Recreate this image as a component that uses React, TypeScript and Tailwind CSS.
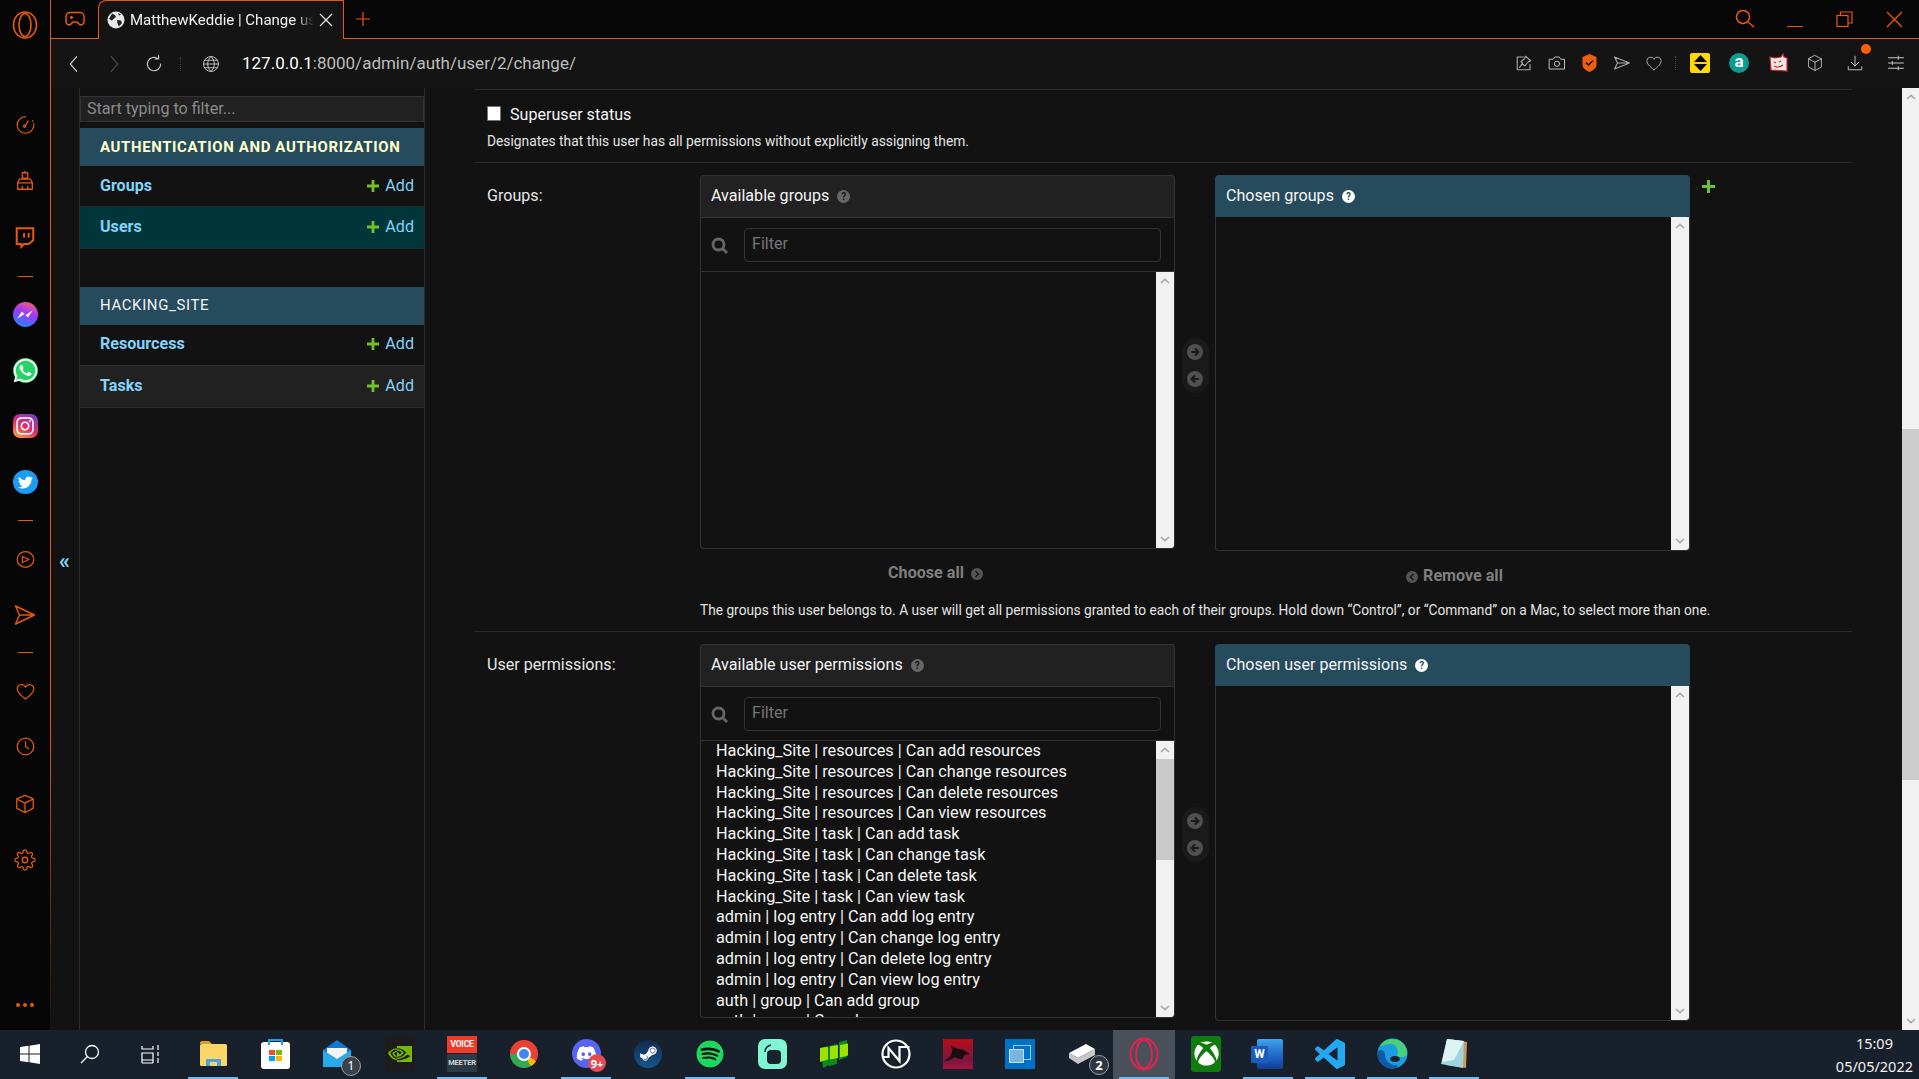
import React from 'react';
import { FaDiscord, FaSpotify, FaSteamSymbol, FaWhatsapp, FaInstagram, FaTwitter, FaXbox } from 'react-icons/fa';
import { SiNvidia } from 'react-icons/si';

const ORANGE = '#e8590c';

// small stroke icon wrapper, everything in the browser chrome is drawn like this
const Ic = ({ size = 20, color = ORANGE, sw = 1.4, children }: { size?: number; color?: string; sw?: number; children: React.ReactNode }) => (
  <svg width={size} height={size} viewBox="0 0 24 24" fill="none" stroke={color} strokeWidth={sw} strokeLinecap="round" strokeLinejoin="round">
    {children}
  </svg>
);

const Chevron = ({ up = false }: { up?: boolean }) => (
  <svg width="10" height="6" viewBox="0 0 10 6" fill="none" stroke="#a8a8a8" strokeWidth="1.6">
    <path d={up ? 'M1 5l4-3.6L9 5' : 'M1 1l4 3.6L9 1'} />
  </svg>
);

const Scrollbar = ({ thumb }: { thumb?: boolean }) => (
  <div className="w-[18px] shrink-0 bg-[#f1f1f1] flex flex-col items-center">
    <div className="h-[18px] shrink-0 flex items-center justify-center"><Chevron up /></div>
    <div className="flex-1 w-full">{thumb && <div className="h-[101px] w-full bg-[#c9c9c9]" />}</div>
    <div className="h-[18px] shrink-0 flex items-center justify-center"><Chevron /></div>
  </div>
);

const Help = ({ white = false }: { white?: boolean }) => (
  <span className={`inline-flex w-[13px] h-[13px] rounded-full items-center justify-center text-[10px] font-bold leading-none ml-[8px] ${white ? 'bg-white text-[#264b5d]' : 'bg-[#666666] text-[#121212]'}`}>?</span>
);

const RoundArrow = ({ left = false }: { left?: boolean }) => (
  <svg width="16" height="16" viewBox="0 0 16 16">
    <circle cx="8" cy="8" r="8" fill="#505050" />
    <path d={left ? 'M12 8H5M8 4.5L4.5 8 8 11.5' : 'M4 8h7M8 4.5L11.5 8 8 11.5'} stroke="#1a1a1a" strokeWidth="2" fill="none" />
  </svg>
);

const Plus = ({ size = 12 }: { size?: number }) => (
  <svg width={size} height={size} viewBox="0 0 12 12"><path d="M4.6 0h2.8v4.6H12v2.8H7.4V12H4.6V7.4H0V4.6h4.6z" fill="#70bf2b" /></svg>
);

const Selector = ({ title, chosen, items, availH, chosenH }: { title: string; chosen: string; items: string[]; availH: string; chosenH: string }) => (
  <div className="flex items-start">
    <div className="w-[475px]">
      <div className="border border-b-0 border-[#333333] rounded-t-[4px] h-[42px] bg-[#212121] flex items-center pl-[10px] text-[16.1px] text-[#f5f5f5]">
        {`Available ${title}`}<Help />
      </div>
      <div className="border border-[#333333] h-[55px] flex items-center pl-[10px] pr-[13px]">
        <svg width="18" height="18" viewBox="0 0 18 18" fill="none" stroke="#666666" strokeWidth="2.8" className="mt-[3px] shrink-0">
          <circle cx="7.5" cy="7.5" r="5.5" /><path d="M11.5 11.5L16 16" />
        </svg>
        <div className="ml-[15px] flex-1 h-[34px] border border-[#333333] rounded-[4px] flex items-center pl-[7px] text-[16.1px] text-[#757575]">Filter</div>
      </div>
      <div className={`border border-t-0 border-[#333333] rounded-b-[4px] flex overflow-hidden ${availH}`}>
        <div className="flex-1 overflow-hidden pl-[15px] text-[16.27px] text-[#f5f5f5]">
          {items.map((it) => <div key={it} className="h-[20.8px] leading-[20.8px] whitespace-nowrap">{it}</div>)}
        </div>
        <Scrollbar thumb={items.length > 0} />
      </div>
      <div className="flex items-center justify-center h-[22px] mt-[13px] text-[16.1px] font-bold text-[#7f7f7f] -translate-x-[2px]">
        Choose all
        <span className="ml-[7px] mt-[2px] flex"><svg width="12" height="12" viewBox="0 0 12 12"><circle cx="6" cy="6" r="6" fill="#555555" /><path d="M4.5 3L7.5 6l-3 3" stroke="#1a1a1a" strokeWidth="1.6" fill="none" /></svg></span>
      </div>
    </div>
    <div className="w-[40px] shrink-0 flex justify-center pt-[163px]">
      <div className="w-[27px] h-[55px] rounded-[14px] bg-[#1a1a1a] flex flex-col items-center justify-center gap-[11px]">
        <RoundArrow /><RoundArrow left />
      </div>
    </div>
    <div className="w-[475px]">
      <div className="border border-b-0 border-[#264b5d] rounded-t-[4px] h-[42px] bg-[#264b5d] flex items-center pl-[10px] text-[16.1px] text-[#f5f5f5]">
        {`Chosen ${chosen}`}<Help white />
      </div>
      <div className={`border border-t-0 border-[#333333] rounded-b-[4px] flex justify-end overflow-hidden ${chosenH}`}>
        <Scrollbar />
      </div>
      <div className="flex items-center justify-center h-[22px] mt-[14px] text-[16.1px] font-bold text-[#7f7f7f] translate-x-[2px]">
        <span className="mr-[5px] mt-[2px] flex"><svg width="12" height="12" viewBox="0 0 12 12"><circle cx="6" cy="6" r="6" fill="#555555" /><path d="M7.5 3L4.5 6l3 3" stroke="#1a1a1a" strokeWidth="1.6" fill="none" /></svg></span>
        Remove all
      </div>
    </div>
  </div>
);

const PERMISSIONS = [
  'Hacking_Site | resources | Can add resources',
  'Hacking_Site | resources | Can change resources',
  'Hacking_Site | resources | Can delete resources',
  'Hacking_Site | resources | Can view resources',
  'Hacking_Site | task | Can add task',
  'Hacking_Site | task | Can change task',
  'Hacking_Site | task | Can delete task',
  'Hacking_Site | task | Can view task',
  'admin | log entry | Can add log entry',
  'admin | log entry | Can change log entry',
  'admin | log entry | Can delete log entry',
  'admin | log entry | Can view log entry',
  'auth | group | Can add group',
  'auth | group | Can change group',
];

const SideRow = ({ name, cls }: { name: string; cls: string }) => (
  <div className={`flex items-center justify-between pl-[20px] pr-[10px] text-[16.1px] ${cls}`}>
    <span className="font-bold text-[#81d4fa]">{name}</span>
    <span className="flex items-center gap-[6px] text-[#81d4fa]"><Plus />Add</span>
  </div>
);

const Sidebar = () => (
  <div className="w-[346px] shrink-0 border-r border-[#2a2a2a] border-l pt-[8px]">
    <div className="h-[26px] mb-[6px] bg-[#212121] border border-[#333333] flex items-center pl-[6px] text-[16.1px] text-[#8a8a8a]">Start typing to filter...</div>
    <div className="h-[38px] pt-[1px] bg-[#264b5d] flex items-center pl-[20px] text-[14.95px] font-bold tracking-[0.65px] text-[#ffffcc]">AUTHENTICATION AND AUTHORIZATION</div>
    <SideRow name="Groups" cls="h-[41px] border-b border-[#2a2a2a]" />
    <SideRow name="Users" cls="h-[42px] bg-[#00363a] border-b border-[#2a2a2a]" />
    <div className="h-[38px]" />
    <div className="h-[38px] pb-[1px] bg-[#264b5d] flex items-center pl-[20px] text-[14.95px] tracking-[0.65px] text-[#f5f5f5]">HACKING_SITE</div>
    <SideRow name="Resourcess" cls="h-[41px] pb-[2px] border-b border-[#2a2a2a]" />
    <SideRow name="Tasks" cls="h-[42px] bg-[#212121] border-b border-[#2a2a2a]" />
  </div>
);

const MainForm = () => (
  <div className="flex-1 min-w-0 overflow-hidden px-[50px] pt-[1px]">
    <div className="border-t border-[#2a2a2a]" />
    <div className="h-[73px] pl-[12px] border-b border-[#2a2a2a] pt-[15px]">
      <div className="flex items-center h-[20px] text-[16.1px] text-[#f5f5f5]">
        <span className="w-[14px] h-[15px] bg-white border border-[#767676] rounded-[1px] mr-[9px] -translate-y-[2px]" />
        Superuser status
      </div>
      <div className="mt-[7px] text-[13.8px] leading-[18px] text-[#e4e4e4]">Designates that this user has all permissions without explicitly assigning them.</div>
    </div>
    <div className="h-[469px] border-b border-[#2a2a2a] pl-[12px] pt-[12px] flex">
      <div className="w-[213px] shrink-0 text-[16.1px] text-[#e6e6e6] leading-[20px] mt-[11px]">Groups:</div>
      <div>
        <div className="flex items-start">
          <Selector title="groups" chosen="groups" items={[]} availH="h-[277px]" chosenH="h-[334px]" />
          <span className="mt-[5px] ml-[12px]"><Plus size={13} /></span>
        </div>
        <div className="mt-[14px] text-[13.73px] leading-[18px] text-[#e4e4e4] whitespace-nowrap">
          The groups this user belongs to. A user will get all permissions granted to each of their groups. Hold down “Control”, or “Command” on a Mac, to select more than one.
        </div>
      </div>
    </div>
    <div className="pl-[12px] pt-[12px] flex">
      <div className="w-[213px] shrink-0 text-[16.1px] text-[#e6e6e6] leading-[20px] mt-[11px]">User permissions:</div>
      <Selector title="user permissions" chosen="user permissions" items={PERMISSIONS} availH="h-[277px]" chosenH="h-[335px]" />
    </div>
  </div>
);

const RailIcon = ({ children, cls }: { children: React.ReactNode; cls: string }) => (
  <div className={`flex justify-center items-center h-[24px] ${cls}`}>{children}</div>
);

const RailSep = ({ cls }: { cls: string }) => <div className={`w-[15px] h-px bg-[#e8590c] self-center ${cls}`} />;

const Rail = () => (
  <div className="w-[50px] shrink-0 bg-[#060606] flex flex-col">
    <RailIcon cls="mt-[13px]">
      <svg width="26" height="28" viewBox="0 0 26 28" fill="none" stroke={ORANGE} strokeWidth="1.6"><ellipse cx="13" cy="14" rx="11.5" ry="13" /><ellipse cx="13" cy="14" rx="6" ry="11.5" /></svg>
    </RailIcon>
    <RailIcon cls="mt-[75px]"><Ic size={21}><path d="M12 3a9.5 9.5 0 1 0 9.5 9.5M16 3.8" /><path d="M20 7.5l.3.6M21.2 10.5v.2M12 13l3-5" /><circle cx="11" cy="14" r="1.2" /></Ic></RailIcon>
    <RailIcon cls="mt-[33px]"><Ic size={22}><path d="M9 3h6v6H9zM12 3V1.5" /><path d="M6 10h12l2 4v7H4v-7z" /><path d="M4 14h16M9 21v-3M15 21v-3" /></Ic></RailIcon>
    <RailIcon cls="mt-[32px]"><svg width="22" height="23" viewBox="0 0 24 24" fill="none" stroke={ORANGE} strokeWidth="2.2"><path d="M3 2h18v13l-5 4h-5l-3 3v-3H3z" /><path d="M11 7v5M16 7v5" /></svg></RailIcon>
    <RailSep cls="mt-[27px]" />
    <RailIcon cls="mt-[25px]">
      <span className="w-[25px] h-[25px] rounded-full bg-[linear-gradient(200deg,#ff6968,#a334fa_45%,#0695ff)] flex items-center justify-center">
        <svg width="18" height="11" viewBox="0 0 15 9"><path d="M1 8l4-6 3 3 6-4-4 6-3-3z" fill="#fff" /></svg>
      </span>
    </RailIcon>
    <RailIcon cls="mt-[32px]">
      <span className="relative w-[25px] h-[25px] rounded-full bg-[#25d366] flex items-center justify-center"><FaWhatsapp size={27} color="#f4f4f4" className="absolute" /></span>
    </RailIcon>
    <RailIcon cls="mt-[32px]">
      <span className="w-[25px] h-[24px] rounded-[7px] bg-[linear-gradient(30deg,#fdb03a,#e1306c_45%,#6b3bd1)] flex items-center justify-center"><FaInstagram size={20} color="#fff" /></span>
    </RailIcon>
    <RailIcon cls="mt-[32px]">
      <span className="w-[25px] h-[24px] rounded-full bg-[#1d9bf0] flex items-center justify-center"><FaTwitter size={15} color="#fff" /></span>
    </RailIcon>
    <RailSep cls="mt-[26px]" />
    <RailIcon cls="mt-[26px]"><Ic size={21}><ellipse cx="12" cy="12" rx="9.5" ry="9" /><path d="M8.5 8.5l7.5 3.5-7.5 3.5z" /></Ic></RailIcon>
    <RailIcon cls="mt-[32px]"><Ic size={24}><path d="M2.5 3l19 9-19 9 4-9zM6.5 12h15" /></Ic></RailIcon>
    <RailSep cls="mt-[25px]" />
    <RailIcon cls="mt-[26px]"><Ic size={21}><path d="M12 20.5C6 16 2.5 13 2.5 9a5 5 0 0 1 9.5-2 5 5 0 0 1 9.500 2c0 4-3.500 7-9.500 11.500z" /></Ic></RailIcon>
    <RailIcon cls="mt-[31px]"><Ic size={21}><circle cx="12" cy="12" r="9.500" /><path d="M12 6.500V12l3.500 2.500" /></Ic></RailIcon>
    <RailIcon cls="mt-[34px]"><Ic size={22}><path d="M12 2.500l9 4v10l-9 5-9-5v-10zM3 6.500l9 4.500 9-4.500M12 11v10.500" /></Ic></RailIcon>
    <RailIcon cls="mt-[32px]">
      <Ic size={22}><circle cx="12" cy="12" r="3" /><path d="M19.400 15a1.650 1.650 0 0 0 .330 1.820l.060.060a2 2 0 1 1-2.830 2.830l-.060-.060a1.650 1.650 0 0 0-2.800 1.170V21a2 2 0 1 1-4 0v-.090a1.650 1.650 0 0 0-2.800-1.170l-.060.060a2 2 0 1 1-2.830-2.830l.060-.060a1.650 1.650 0 0 0-1.170-2.800H3a2 2 0 1 1 0-4h.090a1.650 1.650 0 0 0 1.170-2.800l-.060-.060a2 2 0 1 1 2.830-2.830l.060.060a1.650 1.650 0 0 0 2.800-1.170V3a2 2 0 1 1 4 0v.090a1.650 1.650 0 0 0 2.800 1.170l.060-.060a2 2 0 1 1 2.830 2.830l-.060.060a1.650 1.650 0 0 0 1.170 2.800H21a2 2 0 1 1 0 4h-.090a1.650 1.650 0 0 0-1.510 1z" /></Ic>
    </RailIcon>
    <div className="mt-[131px] flex justify-center gap-[3px]">
      <span className="w-[4px] h-[4px] rounded-full bg-[#e8590c]" /><span className="w-[4px] h-[4px] rounded-full bg-[#e8590c]" /><span className="w-[4px] h-[4px] rounded-full bg-[#e8590c]" />
    </div>
  </div>
);

const TabStrip = () => (
  <div className="h-[39px] shrink-0 bg-[#070707] flex items-start border-b border-[#e8590c] relative">
    <div className="w-[47px] h-[38px] flex items-center justify-center">
      <svg width="20" height="16" viewBox="0 0 20 16" fill="none" stroke={ORANGE} strokeWidth="1.5"><path d="M5 1.500h10a4 4 0 0 1 4 4v5.500a3 3 0 0 1-5.500 1.500L12 11H8l-1.500 1.500A3 3 0 0 1 1 11V5.500a4 4 0 0 1 4-4z" /><path d="M5 6.500h3M6.500 5v3M13 6h.01M15 8h.01" /></svg>
    </div>
    <div className="w-[246px] h-[39px] bg-[#141414] border border-b-0 border-[#e8590c] rounded-tl-[8px] flex items-center pl-[8px] -mb-px relative z-10">
      <svg width="18" height="18" viewBox="0 0 18 18"><circle cx="9" cy="9" r="8.500" fill="#e8e8e8" /><path d="M5 2.500l3 1.500 1 2-2 1.500-2 2L2 8zM10 9l4 .5 1 2.500-3 3.500-1.500-3zM11 2l3 1.500-2 1z" fill="#222222" /></svg>
      <span className="ml-[5px] w-[184px] overflow-hidden whitespace-nowrap text-[15px] text-[#f2f2f2] [mask-image:linear-gradient(90deg,#000_90%,transparent)]">MatthewKeddie | Change user</span>
      <svg width="14" height="14" viewBox="0 0 14 14" stroke="#e8e8e8" strokeWidth="1.2" className="ml-[5px]"><path d="M1 1l12 12M13 1L1 13" /></svg>
    </div>
    <div className="w-[36px] h-[38px] flex items-center justify-center ml-[1px]">
      <svg width="16" height="16" viewBox="0 0 16 16" stroke={ORANGE} strokeWidth="1.2"><path d="M8 1v14M1 8h14" /></svg>
    </div>
    <div className="ml-auto flex items-center h-[38px]">
      <span className="w-[50px] flex justify-center pl-[2px]"><svg width="20" height="20" viewBox="0 0 20 20" fill="none" stroke={ORANGE} strokeWidth="1.5"><circle cx="8" cy="8" r="6.500" /><path d="M13 13l6 5" /></svg></span>
      <span className="w-[50px] flex justify-center pt-[15px] pl-[2px]"><span className="w-[16px] h-px bg-[#e8590c]" /></span>
      <span className="w-[50px] flex justify-center"><svg width="17" height="17" viewBox="0 0 17 17" fill="none" stroke={ORANGE} strokeWidth="1.200"><rect x="1" y="4.500" width="11" height="11" /><path d="M4.500 4.500V1H16v11h-4" /></svg></span>
      <span className="w-[50px] flex justify-center"><svg width="17" height="17" viewBox="0 0 17 17" stroke={ORANGE} strokeWidth="1.300"><path d="M1 1l15 15M16 1L1 16" /></svg></span>
    </div>
  </div>
);

const Slot = ({ w, children }: { w: string; children: React.ReactNode }) => (
  <span className={`${w} shrink-0 flex justify-center items-center`}>{children}</span>
);

const Toolbar = () => (
  <div className="h-[49px] shrink-0 bg-[#141414] flex items-center">
    <Slot w="w-[45px]"><Ic color="#c8c8c8" size={22} sw={1.300}><path d="M15 4l-7 8 7 8" /></Ic></Slot>
    <Slot w="w-[35px]"><Ic color="#4a4a4a" size={22} sw={1.300}><path d="M9 4l7 8-7 8" /></Ic></Slot>
    <Slot w="w-[46px]"><Ic color="#c8c8c8" size={20} sw={1.400}><path d="M20 12a8 8 0 1 1-3-6.200M17.500 2v4h-4" /></Ic></Slot>
    <span className="w-px h-[14px] border-l border-dotted border-[#444444] ml-[3px]" />
    <span className="ml-[21px]"><Ic color="#c8c8c8" size={18} sw={1.200}><circle cx="12" cy="12" r="10" /><path d="M2 12h20M12 2c-6 6-6 14 0 20M12 2c6 6 6 14 0 20M3.500 7h17M3.500 17h17" /></Ic></span>
    <span className="ml-[22px] text-[17px] text-[#bdbdbd] whitespace-nowrap"><span className="text-white">127.0.0.1</span>:8000/admin/auth/user/2/change/</span>
    <div className="ml-auto flex items-center pr-[5px] mb-[2px]">
      <Slot w="w-[32px]"><Ic color="#a8a8a8" size={18} sw={1.500}><path d="M11 4H3v17h17v-7M14 3l7 6-4 2-4 5-3-3-4 5 4-6-2-2 4-3z" /></Ic></Slot>
      <Slot w="w-[33px]"><Ic color="#c0c0c0" size={18} sw={1.300}><path d="M2 7h5l2-3h6l2 3h5v13H2z" /><circle cx="12" cy="13" r="3.500" /></Ic></Slot>
      <Slot w="w-[32px]"><svg width="15" height="18" viewBox="0 0 15 18"><path d="M7.500 0L14.500 3v8c0 3-3.500 5.500-7 7-3.500-1.500-7-4-7-7V3z" fill="#ef5d0e" /><path d="M4 8.500l2.500 2.500 4.500-4.500" fill="none" stroke="#141414" strokeWidth="1.500" /></svg></Slot>
      <Slot w="w-[33px]"><Ic color="#a8a8a8" size={18} sw={1.400}><path d="M2 4l20 8-20 8 4-8zM6 12h16" /></Ic></Slot>
      <Slot w="w-[32px]"><Ic color="#a8a8a8" size={18} sw={1.300}><path d="M12 21C6 16.500 2.500 13 2.500 9a5 5 0 0 1 9.500-2 5 5 0 0 1 9.500 2c0 4-3.500 7.500-9.500 12z" /></Ic></Slot>
      <Slot w="w-[10px]"><span className="w-px h-[14px] border-l border-dotted border-[#444444]" /></Slot>
      <Slot w="w-[40px]">
        <span className="w-[20px] h-[20px] bg-[#ffd800] rounded-[2px] flex flex-col items-center justify-center gap-[2px]">
          <svg width="13" height="7" viewBox="0 0 13 7"><path d="M6.500 0L13 7H0z" fill="#000" /></svg>
          <svg width="13" height="7" viewBox="0 0 13 7"><path d="M6.500 7L13 0H0z" fill="#000" /></svg>
        </span>
      </Slot>
      <Slot w="w-[38px]"><span className="w-[20px] h-[20px] rounded-full bg-[#0d9b8f] flex items-center justify-center text-[17px] font-bold text-white leading-none pb-[2px]">a</span></Slot>
      <Slot w="w-[40px]"><svg width="19" height="19" viewBox="0 0 19 19"><path d="M1 4l5 1 6-1 2-3 1 3 3 1v13l-16-1z" fill="#f3e6e6" stroke="#c62828" strokeWidth="1.200" /><path d="M5 9l2 1M10 9l2-1M5 13c3 2 6 1 9-1" stroke="#c62828" strokeWidth="1.200" fill="none" /></svg></Slot>
      <Slot w="w-[34px]"><Ic color="#c0c0c0" size={18} sw={1.200}><path d="M12 2l8.500 4.500v11L12 22l-8.500-4.500v-11zM3.500 6.500L12 11l8.500-4.500M12 11v11" /></Ic></Slot>
      <Slot w="w-[46px]">
        <span className="relative flex">
          <Ic color="#c0c0c0" size={18} sw={1.300}><path d="M12 3v13M7 11l5 5 5-5M3 17v4h18v-4" /></Ic>
          <span className="absolute -top-[10px] -right-[7px] w-[10px] h-[10px] rounded-full bg-[#ff5f00]" />
        </span>
      </Slot>
      <Slot w="w-[36px]"><Ic color="#c8c8c8" size={18} sw={1.300}><path d="M2 5h20M2 12h20M2 19h20M15 3v4M7 10v4M15 17v4" /></Ic></Slot>
    </div>
  </div>
);

const PageScroll = () => (
  <div className="w-[17px] shrink-0 bg-[#f1f1f1] flex flex-col items-center">
    <div className="h-[18px] flex items-center justify-center"><Chevron up /></div>
    <div className="flex-1 w-full pt-[323px]"><div className="h-[351px] bg-[#cdcdcd]" /></div>
    <div className="h-[18px] flex items-center justify-center"><Chevron /></div>
  </div>
);

const Badge = ({ n, cls }: { n: string; cls: string }) => (
  <span className={`absolute flex items-center justify-center rounded-full font-['Noto_Sans',sans-serif] leading-none text-white ${cls}`}>{n}</span>
);

const TaskBtn = ({ on, w = 'w-[62px]', bar, children }: { on?: boolean; w?: string; bar?: boolean; children: React.ReactNode }) => (
  <div className={`${w} h-full shrink-0 flex flex-col items-center relative ${on ? 'bg-[#495059]' : ''}`}>
    <div className="h-[47px] flex items-center justify-center relative w-full">{children}</div>
    {bar && <div className="absolute bottom-0 left-[6px] right-[6px] h-[2px] bg-[#76b9ed]" />}
  </div>
);

const Taskbar = () => (
  <div className="h-[49px] shrink-0 bg-[#18202b] flex items-center pr-[6px]">
    <TaskBtn w="w-[60px]">
      <svg width="20" height="20" viewBox="0 0 20 20" fill="#fff"><path d="M0 3l8.500-1.200v7.700H0zM9.500 1.700L20 0v9.500H9.500zM0 10.500h8.500v7.700L0 17zM9.500 10.500H20V20L9.500 18.300z" /></svg>
    </TaskBtn>
    <TaskBtn w="w-[60px]">
      <svg width="20" height="20" viewBox="0 0 20 20" fill="none" stroke="#fff" strokeWidth="1.300"><circle cx="12" cy="8" r="6.500" /><path d="M7.500 12.500L1 19" /></svg>
    </TaskBtn>
    <TaskBtn w="w-[62px]">
      <svg width="20" height="20" viewBox="0 0 20 20" fill="none" stroke="#fff" strokeWidth="1.200"><path d="M1 2v3h11V2M1 9h11v7H1zM1 19v-3M12 19v-3M1 19h11M17 1v5M17 8v4M17 14v5" /></svg>
    </TaskBtn>
    <TaskBtn bar>
      <svg width="27" height="25" viewBox="0 0 27 25"><path d="M0 2a2 2 0 0 1 2-2h7l3 3H0z" fill="#d9a21b" /><rect y="3" width="27" height="22" rx="1.500" fill="#fbd666" /><path d="M6 25v-7h15v7h-4v-4h-7v4z" fill="#4aa3e0" /></svg>
    </TaskBtn>
    <TaskBtn w="w-[63px]">
      <span className="w-[29px] h-[27px] rounded-[3px] bg-white relative grid grid-cols-2 gap-px p-[8px] pt-[8px] mt-[3px]">
        <span className="absolute -top-[3px] left-[7px] w-[15px] h-[6px] border-2 border-b-0 border-[#1ba1e2]" />
        <span className="bg-[#f25022]" /><span className="bg-[#7fba00]" /><span className="bg-[#00a4ef]" /><span className="bg-[#ffb900]" />
      </span>
    </TaskBtn>
    <TaskBtn>
      <svg width="30" height="30" viewBox="0 0 30 30" className="-translate-x-[1px]"><path d="M1 11L15 1l14 10v17H1z" fill="#0f78d4" /><path d="M5 9h20v10L15 25 5 19z" fill="#f3f3f3" /><path d="M1 11l14 9 14-9v17H1z" fill="#29a8ea" /></svg>
      <Badge n="1" cls="left-[34px] top-[26px] w-[20px] h-[20px] border border-[#9aa0a6] bg-[#3a424c] text-[12px]" />
    </TaskBtn>
    <TaskBtn>
      <span className="w-[30px] h-[36px] bg-[#1c1c1c] flex items-center justify-center"><SiNvidia size={24} color="#76b900" /></span>
    </TaskBtn>
    <TaskBtn bar>
      <span className="w-[30px] h-[36px] flex flex-col justify-between font-bold">
        <span className="h-[17px] bg-[#f13a2a] text-white text-[8.5px] leading-[17px] text-center tracking-tight">VOICE</span>
        <span className="h-[18px] bg-[#2b3a47] text-[#d0d4d8] text-[7.5px] leading-[18px] text-center tracking-tight">MEETER</span>
      </span>
    </TaskBtn>
    <TaskBtn>
      <span className="w-[28px] h-[28px] rounded-full bg-[conic-gradient(#ea4335_0_120deg,#fbbc05_120deg_150deg,#34a853_150deg_270deg,#ea4335_270deg)] flex items-center justify-center">
        <span className="w-[14px] h-[14px] rounded-full bg-[#4285f4] border-2 border-white" />
      </span>
    </TaskBtn>
    <TaskBtn bar>
      <span className="w-[29px] h-[29px] rounded-full bg-[#5865f2] flex items-center justify-center"><FaDiscord size={21} color="#fff" /></span>
      <Badge n="9+" cls="left-[33px] top-[24px] w-[18px] h-[18px] bg-[#e24c53] text-[11px] font-bold" />
    </TaskBtn>
    <TaskBtn>
      <span className="w-[28px] h-[28px] rounded-full bg-[linear-gradient(180deg,#112a4c,#14578e)] flex items-center justify-center"><FaSteamSymbol size={19} color="#fff" /></span>
    </TaskBtn>
    <TaskBtn bar>
      <span className="w-[28px] h-[28px] rounded-full bg-[#111111] flex items-center justify-center"><FaSpotify size={28} color="#1ed760" /></span>
    </TaskBtn>
    <TaskBtn>
      <span className="w-[29px] h-[30px] rounded-[7px] bg-[#80f5d2] flex items-center justify-center relative">
        <span className="w-[14px] h-[14px] rounded-[4px] bg-[#17242d] mt-[6px] ml-[3px]" />
        <svg width="8" height="9" viewBox="0 0 8 9" fill="none" stroke="#17242d" strokeWidth="1.500" className="absolute top-[5px] left-[6px]"><path d="M1 8c0-4 2-6 6-7" /></svg>
      </span>
    </TaskBtn>
    <TaskBtn>
      <svg width="30" height="28" viewBox="0 0 30 28"><path d="M2 9l8-1v17l-6 3z" fill="#0d8a1e" /><path d="M10 6l8-2v20l-8 2z" fill="#0d8a1e" /><path d="M20 2l8-2v17l-8 3z" fill="#0d8a1e" /><path d="M1 8l8-1.500v13L1 22zM11 6.500l8-1.500v13l-8 1.500zM21 5l8-1.500v12l-8 2z" fill="#9be400" /></svg>
    </TaskBtn>
    <TaskBtn>
      <svg width="30" height="30" viewBox="0 0 30 30" fill="none" stroke="#fff" strokeWidth="2.200"><circle cx="15" cy="15" r="13.500" /><path d="M1.500 18h6V9l11 13V8h10" /></svg>
    </TaskBtn>
    <TaskBtn>
      <span className="w-[30px] h-[30px] bg-[linear-gradient(180deg,#b90d17,#7a1742_70%,#a31240)] flex items-center justify-center">
        <svg width="28" height="22" viewBox="0 0 26 18"><path d="M0 16l6-5 2-6L6 1l6 3 6 1 6 4-5 1-2 4-7-2-6 3z" fill="#1a0c10" /></svg>
      </span>
    </TaskBtn>
    <TaskBtn>
      <span className="w-[30px] h-[30px] bg-[#0072c6] relative flex items-center justify-center">
        <span className="w-[18px] h-[15px] border border-[#9ecbec] absolute left-[8px] top-[6px]" />
        <span className="w-[15px] h-[14px] bg-[#7ab5e2] border border-[#c4e0f4] absolute left-[4px] top-[10px]" />
      </span>
    </TaskBtn>
    <TaskBtn>
      <svg width="28" height="22" viewBox="0 0 28 22"><path d="M1 10L18 1l9 5-17 9z" fill="#fff" /><path d="M1 10v5l9 6v-6zM10 15v6l17-9V6z" fill="#c7c7c7" /></svg>
      <Badge n="2" cls="left-[38px] top-[25px] w-[20px] h-[20px] border border-[#9aa0a6] bg-[#2f3640] text-[13px] font-bold" />
    </TaskBtn>
    <TaskBtn on bar>
      <svg width="30" height="34" viewBox="0 0 30 34" fill="none" stroke="#e0244f" strokeWidth="2"><ellipse cx="15" cy="17" rx="13.500" ry="15.500" /><ellipse cx="15" cy="17" rx="8" ry="14" /></svg>
    </TaskBtn>
    <TaskBtn>
      <span className="w-[30px] h-[36px] rounded-[3px] bg-[#107c10] flex items-center justify-center"><FaXbox size={25} color="#fff" /></span>
    </TaskBtn>
    <TaskBtn bar>
      <span className="relative w-[34px] h-[34px]">
        <span className="absolute left-[6px] top-[2px] w-[26px] h-[30px] rounded-[2px] bg-[linear-gradient(180deg,#41a5ee,#2b7cd3_35%,#185abd_70%,#103f91)]" />
        <span className="absolute left-0 top-[9px] w-[17px] h-[17px] rounded-[1px] bg-[#1a5bbd] text-white text-[12px] font-bold leading-[17px] text-center">W</span>
      </span>
    </TaskBtn>
    <TaskBtn bar>
      <svg width="30" height="30" viewBox="0 0 24 24"><path fill="#23a9f2" d="M23.150 2.587L18.210.21a1.494 1.494 0 0 0-1.705.29l-9.460 8.630-4.120-3.128a.999.999 0 0 0-1.276.057L.327 7.261A1 1 0 0 0 .326 8.740L3.899 12 .326 15.260a1 1 0 0 0 .001 1.479L1.650 17.940a.999.999 0 0 0 1.276.057l4.120-3.128 9.460 8.630a1.492 1.492 0 0 0 1.704.290l4.942-2.377A1.500 1.500 0 0 0 24 20.060V3.939a1.500 1.500 0 0 0-.850-1.352zm-5.146 14.861L10.826 12l7.178-5.448v10.896z" /></svg>
    </TaskBtn>
    <TaskBtn bar>
      <svg width="31" height="31" viewBox="0 0 31 31"><circle cx="15.500" cy="15.500" r="15" fill="#1b9de2" /><path d="M3 8C7 1 16-1 23 3c5 3 8 9 7 13-1 4-9 4-10 1 3-7-3-12-9-11-4 1-7 3-8 2z" fill="#46d07a" /><path d="M8 17c0 6 6 11 12 10 2 2-3 4-6 4C6 30-1 22 1 14c1-3 7-3 7 3z" fill="#0f5aa8" /><ellipse cx="18" cy="21" rx="5" ry="3" fill="#18202b" /></svg>
    </TaskBtn>
    <TaskBtn bar>
      <svg width="28" height="32" viewBox="0 0 28 32"><path d="M8 1l19 3-1 26-20-3z" fill="#d29a4a" /><path d="M7 1l17 2-1 27L1 26z" fill="#9cd4df" /><path d="M7 1l17 2-10 19L2 24z" fill="#dff3f6" /></svg>
    </TaskBtn>
    <div className="ml-auto flex flex-col items-center text-[14.500px] leading-[23px] text-[#f2f2f2] font-['Noto_Sans',sans-serif] pt-[1px]">
      <span>15:09</span>
      <span>05/05/2022</span>
    </div>
  </div>
);

export default function App() {
  return (
    <div className="w-full h-[1079px] overflow-hidden flex flex-col bg-[#121212] font-['Roboto',sans-serif]">
      <div className="flex-1 min-h-0 flex">
        <Rail />
        <div className="w-px shrink-0 bg-[linear-gradient(180deg,#e8590c_0_70%,#121212)]" />
        <div className="flex-1 min-w-0 flex flex-col">
          <TabStrip />
          <Toolbar />
          <div className="flex-1 min-h-0 flex overflow-hidden">
            <div className="w-[28px] shrink-0 bg-[#121212] flex justify-center items-start pt-[462px] pr-[1px]">
              <span className="text-[#81d4fa] text-[22px] font-bold leading-none">«</span>
            </div>
            <Sidebar />
            <MainForm />
            <PageScroll />
          </div>
        </div>
      </div>
      <Taskbar />
    </div>
  );
}
